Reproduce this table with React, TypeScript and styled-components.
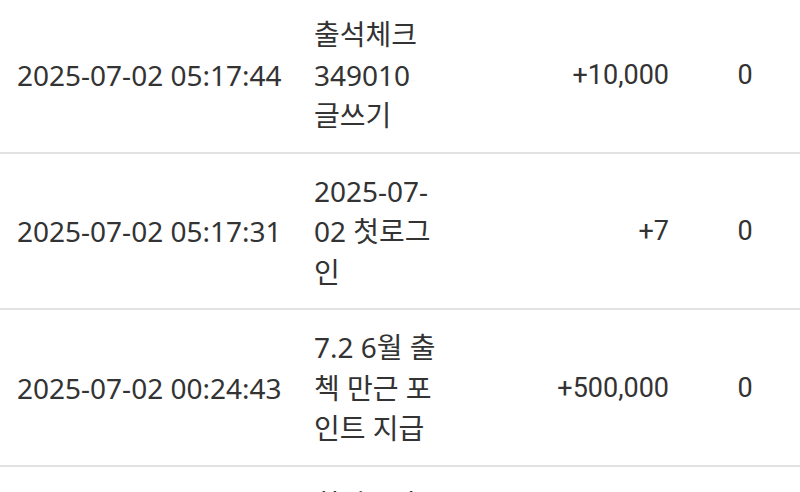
import React from "react";
import styled, { createGlobalStyle } from "styled-components";

const GlobalStyle = createGlobalStyle`
    html, body {
        margin: 0;
        padding: 0;
        background: #ffffff;
    }
    body {
        font-family: "Noto Sans", "Noto Sans CJK KR", sans-serif;
        color: #333333;
        overflow: hidden;
    }
`;

interface PointRow {
    date: string;
    content: string;
    amount: string;
    balance: string;
}

const rows: PointRow[] = [
    { date: "2025-07-02 05:17:44", content: "출석체크 349010 글쓰기", amount: "+10,000", balance: "0" },
    { date: "2025-07-02 05:17:31", content: "2025-07-02 첫로그인", amount: "+7", balance: "0" },
    { date: "2025-07-02 00:24:43", content: "7.2 6월 출첵 만근 포인트 지급", amount: "+500,000", balance: "0" },
    { date: "2025-07-01 23:58:12", content: "회원보상 이벤트 포인트 지급", amount: "+1,000", balance: "0" },
];

const Table = styled.div`
    width: 800px;
    margin-top: -3px;
`;

const Row = styled.div`
    display: grid;
    grid-template-columns: 297px 124px 1fr 110px;
    align-items: center;
    padding: 17px 0 16px 17px;
    border-bottom: 2px solid #e2e2e2;
    font-size: 28px;
    line-height: 40.5px;
`;

const DateCell = styled.div`
    white-space: nowrap;
`;

const ContentCell = styled.div`
    word-break: normal;
    overflow-wrap: break-word;
`;

const NumberCell = styled.div<{ $align: "right" | "center" }>`
    font-family: Roboto, "Noto Sans", sans-serif;
    font-size: 27px;
    text-align: ${({ $align }) => $align};
    padding-right: ${({ $align }) => ($align === "right" ? "21px" : "0")};
`;

export default function App() {
    return (
        <>
            <GlobalStyle />
            <Table>
                {rows.map((row) => (
                    <Row key={row.date}>
                        <DateCell>{row.date}</DateCell>
                        <ContentCell>{row.content}</ContentCell>
                        <NumberCell $align="right">{row.amount}</NumberCell>
                        <NumberCell $align="center">{row.balance}</NumberCell>
                    </Row>
                ))}
            </Table>
        </>
    );
}
